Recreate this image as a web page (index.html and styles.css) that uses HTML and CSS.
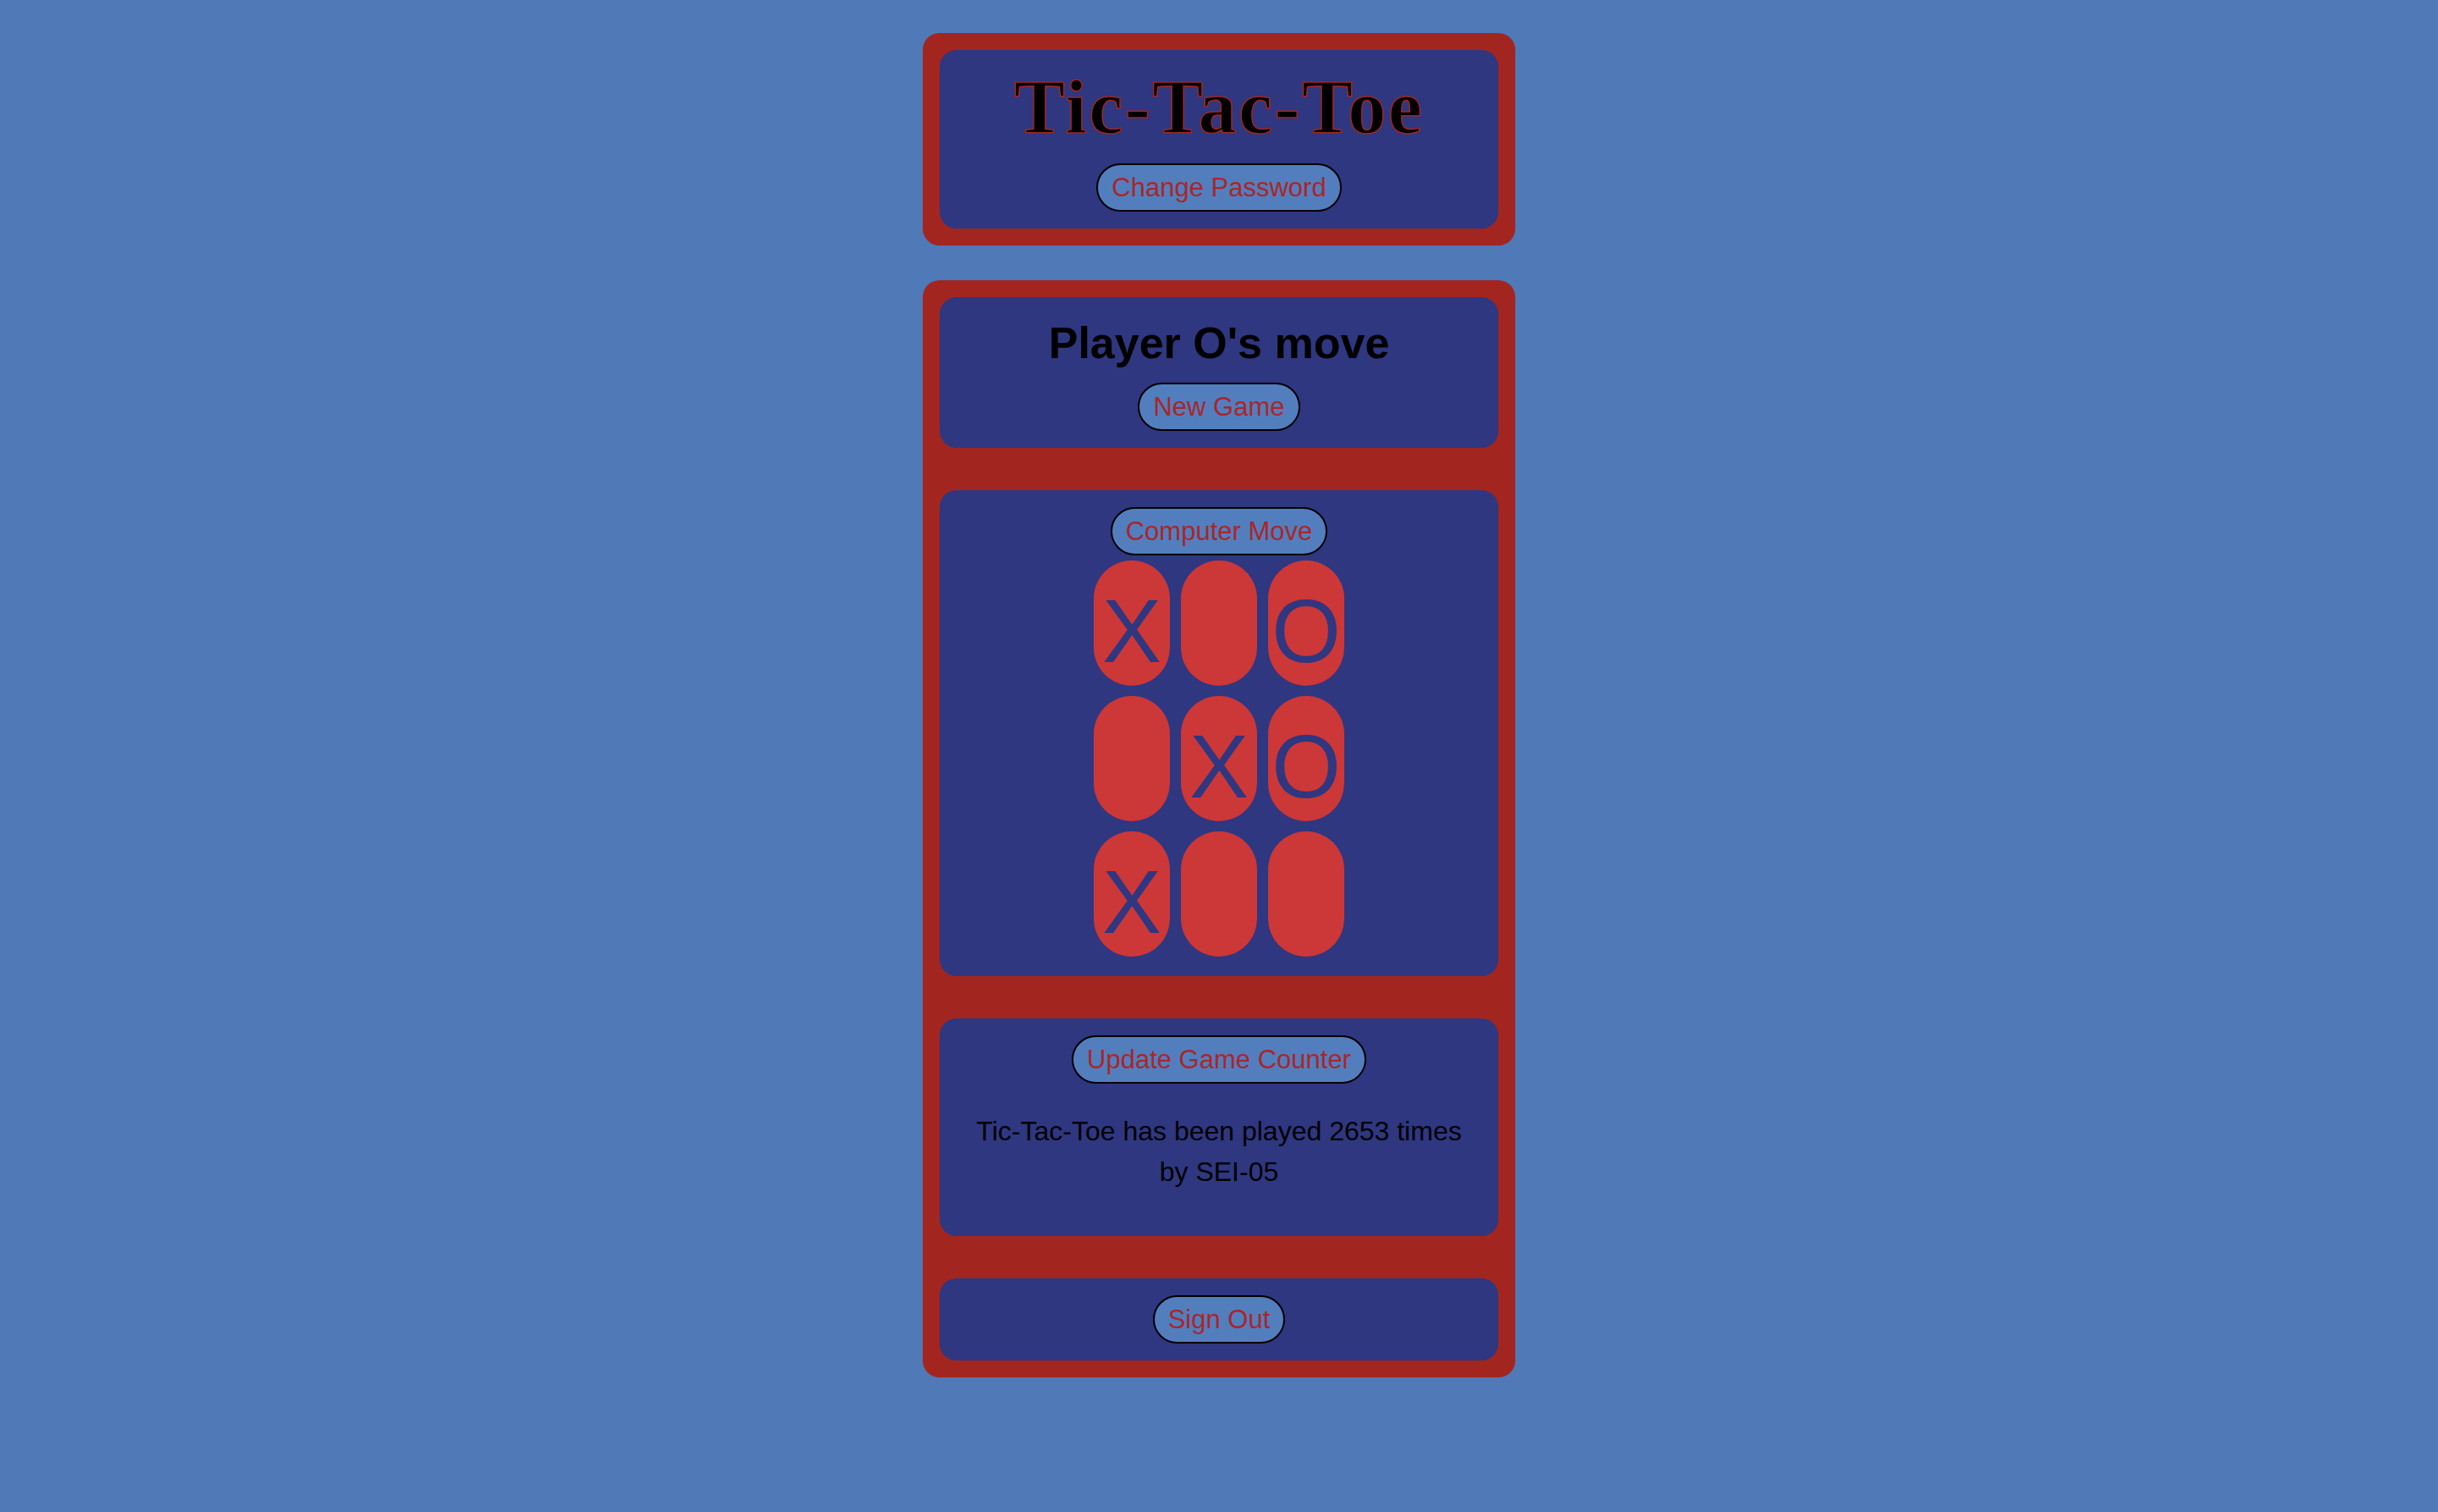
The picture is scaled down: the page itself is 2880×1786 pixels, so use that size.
FILE: index.html
```html
<!DOCTYPE html>
<html lang="en">
<head>
    <meta charset="UTF-8">
    <meta name="viewport" content="width=device-width, initial-scale=1.0">
    <title>Tic-Tac-Toe</title>
    <link rel="stylesheet" href="styles.css">
</head>
<body>
    <div class="page">
        <!-- Header -->
        <div class="panel">
            <div class="card header-card">
                <h1 class="title">Tic-Tac-Toe</h1>
                <button class="btn">Change Password</button>
            </div>
        </div>

        <!-- Game area -->
        <div class="panel">
            <div class="card status-card">
                <h2 class="status">Player O's move</h2>
                <button class="btn">New Game</button>
            </div>

            <div class="card board-card">
                <button class="btn">Computer Move</button>
                <div class="board">
                    <div class="cell">X</div>
                    <div class="cell"></div>
                    <div class="cell">O</div>
                    <div class="cell"></div>
                    <div class="cell">X</div>
                    <div class="cell">O</div>
                    <div class="cell">X</div>
                    <div class="cell"></div>
                    <div class="cell"></div>
                </div>
            </div>

            <div class="card">
                <button class="btn">Update Game Counter</button>
                <p class="counter">Tic-Tac-Toe has been played 2653 times by SEI-05</p>
            </div>

            <div class="card">
                <button class="btn">Sign Out</button>
            </div>
        </div>
    </div>
</body>
</html>
```

FILE: styles.css
```css
body {
    margin: 0;
    min-height: 100vh;
    background-color: #4f79b7;
    font-family: "Liberation Sans", Arial, sans-serif;
}
.page {
    display: flex;
    flex-direction: column;
    align-items: center;
    gap: 41px;
    padding-top: 39px;
}
.panel {
    width: 660px;
    padding: 20px;
    background-color: #a2261f;
    border-radius: 20px;
    display: flex;
    flex-direction: column;
    gap: 50px;
}
.card {
    background-color: #2e3780;
    border-radius: 20px;
    padding: 20px;
    text-align: center;
}
.header-card {
    padding-top: 18px;
}
.title {
    margin: 0 0 16px;
    font-family: "Liberation Serif", "Times New Roman", serif;
    font-weight: bold;
    font-size: 90px;
    line-height: 100px;
    letter-spacing: 2.5px;
    color: #000;
    -webkit-text-stroke: 1.5px #a2261f;
}
.status-card {
    padding-top: 23px;
}
.status {
    margin: 0 0 16px;
    font-size: 52px;
    line-height: 62px;
    font-weight: bold;
    color: #000;
}
.btn {
    display: inline-block;
    font-family: "Liberation Sans", Arial, sans-serif;
    font-size: 31px;
    line-height: 35px;
    padding: 9px 16px;
    color: #a8272a;
    background-color: #537ebe;
    border: 2px solid #000;
    border-radius: 29px;
    cursor: pointer;
}
.board-card {
    padding-bottom: 23px;
}
.board {
    display: grid;
    grid-template-columns: repeat(3, 90px);
    grid-auto-rows: 148px;
    column-gap: 13px;
    row-gap: 12px;
    justify-content: center;
    margin-top: 6px;
}
.cell {
    background-color: #cc3737;
    border-radius: 46px;
    color: #2e3780;
    font-size: 105px;
    display: flex;
    justify-content: center;
    align-items: center;
    padding-top: 20px;
    box-sizing: border-box;
}
.counter {
    margin: 32px 0;
    padding: 0 12px;
    font-size: 32px;
    line-height: 48px;
    color: #000;
}
```
